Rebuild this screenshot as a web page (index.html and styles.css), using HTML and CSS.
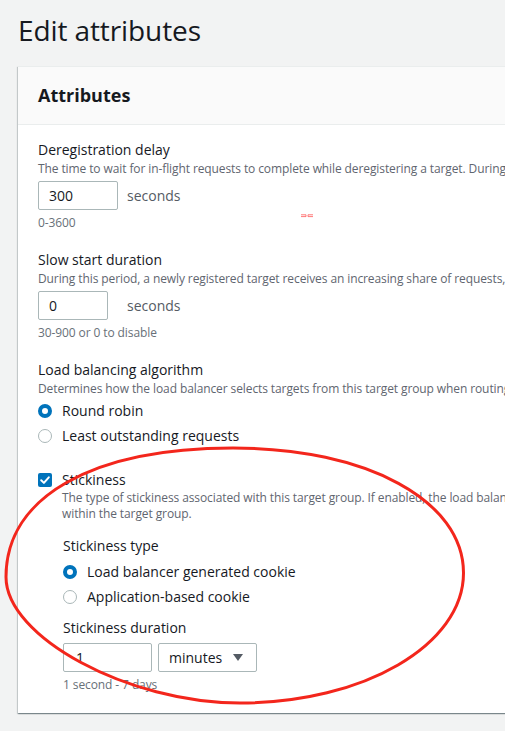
FILE: index.html
```html
<!DOCTYPE html>
<html lang="en">
<head>
<meta charset="utf-8">
<title>Edit attributes</title>
<link rel="stylesheet" href="styles.css">
</head>
<body>
<div class="page">
  <h1 class="title">Edit attributes</h1>
  <section class="card">
    <header class="card-header"><h2 class="card-title">Attributes</h2></header>
    <div class="card-body">
      <div class="field">
        <div class="label">Deregistration delay</div>
        <div class="desc">The time to wait for in-flight requests to complete while deregistering a target. During this time, the state of the target is draining.</div>
        <div class="control-row">
          <div class="input w80">300</div>
          <span class="unit">seconds</span>
        </div>
        <div class="hint">0-3600</div>
      </div>

      <div class="field">
        <div class="label">Slow start duration</div>
        <div class="desc">During this period, a newly registered target receives an increasing share of requests, until it reaches its fair share.</div>
        <div class="control-row">
          <div class="input w70">0</div>
          <span class="unit">seconds</span>
        </div>
        <div class="hint">30-900 or 0 to disable</div>
      </div>

      <div class="field">
        <div class="label">Load balancing algorithm</div>
        <div class="desc">Determines how the load balancer selects targets from this target group when routing requests.</div>
        <div class="radio-group">
          <div class="radio-row"><span class="radio checked"></span><span class="radio-label">Round robin</span></div>
          <div class="radio-row"><span class="radio"></span><span class="radio-label">Least outstanding requests</span></div>
        </div>
      </div>

      <div class="field field-sticky">
        <div class="check-row">
          <span class="checkbox"><svg viewBox="0 0 14 14" width="14" height="14"><path d="M3.2 7.3 L5.9 9.9 L10.8 4.3" fill="none" stroke="#fff" stroke-width="2" stroke-linecap="round" stroke-linejoin="round"/></svg></span>
          <span class="check-label">Stickiness</span>
        </div>
        <div class="nested">
          <div class="desc desc-wrap">The type of stickiness associated with this target group. If enabled, the load balancer binds a client's session to a specific target within the target group.</div>
          <div class="sub-field">
            <div class="label">Stickiness type</div>
            <div class="radio-group">
              <div class="radio-row"><span class="radio checked"></span><span class="radio-label">Load balancer generated cookie</span></div>
              <div class="radio-row"><span class="radio"></span><span class="radio-label">Application-based cookie</span></div>
            </div>
          </div>
          <div class="sub-field duration">
            <div class="label">Stickiness duration</div>
            <div class="control-row tight">
              <div class="input w89">1</div>
              <div class="select">
                <span>minutes</span>
                <svg class="caret" viewBox="0 0 10 7" width="10" height="7"><polygon points="0,0 10,0 5,7" fill="#545b64"/></svg>
              </div>
            </div>
            <div class="hint">1 second - 7 days</div>
          </div>
        </div>
      </div>
    </div>
  </section>
</div>

<svg class="annotation" width="505" height="731" viewBox="0 0 505 731">
  <path d="M6 577 C6 497 92 448 233 448 C366.7 448 463.5 500.5 463.5 573 C463.5 644.8 363.4 703 240 703 C128 703 6 637 6 577 Z" fill="none" stroke="#f3261c" stroke-width="3"/>
  <path d="M301 214.8 H306 V216.6 H301 M313 214.8 H308 V216.6 H313" fill="none" stroke="#ff5a5a" stroke-width="1" opacity="0.8"/>
</svg>
</body>
</html>
```

FILE: styles.css
```css
html, body {
  margin: 0;
  padding: 0;
}
body {
  background: #f2f3f3;
  font-family: "Open Sans", "Noto Sans", "Liberation Sans", sans-serif;
  color: #16191f;
  overflow: hidden;
  width: 505px;
  height: 731px;
  position: relative;
}
.page {
  width: 1200px;
  padding: 12px 0 0 18px;
}
.title {
  margin: 0;
  font-size: 28px;
  line-height: 36px;
  font-weight: 400;
  color: #16191f;
  letter-spacing: -0.1px;
}
.card {
  margin-top: 18px;
  width: 1100px;
  background: #fff;
  border-top: 1px solid #eaeded;
  box-shadow: 0 1px 1px 0 rgba(0, 28, 36, 0.3), 1px 1px 1px 0 rgba(0, 28, 36, 0.15), -1px 1px 1px 0 rgba(0, 28, 36, 0.15);
}
.card-header {
  background: #fafafa;
  border-bottom: 1px solid #eaeded;
  padding: 17px 20px 18px;
}
.card-title {
  margin: 0;
  font-size: 18px;
  line-height: 22px;
  font-weight: 700;
}
.card-body {
  padding: 14px 20px 20px;
  display: flex;
  flex-direction: column;
  gap: 18px;
}
.field {
  display: flex;
  flex-direction: column;
}
.field-sticky {
  margin-top: 3px;
}
.label {
  font-size: 14px;
  line-height: 22px;
  color: #16191f;
}
.desc {
  font-size: 12px;
  line-height: 16px;
  color: #5f6670;
  letter-spacing: -0.1px;
}
.desc-wrap {
  max-width: 712px;
  margin-top: -1px;
}
.hint {
  font-size: 12px;
  line-height: 16px;
  color: #687078;
  margin-top: 5px;
  letter-spacing: -0.1px;
}
.control-row {
  margin-top: 4px;
  display: grid;
  grid-template-columns: 80px auto;
  column-gap: 9px;
  align-items: center;
  justify-content: start;
}
.control-row.tight {
  grid-template-columns: 89px 99px;
  column-gap: 6px;
}
.input {
  box-sizing: border-box;
  height: 29px;
  border: 1px solid #aab7b8;
  border-radius: 2px;
  background: #fff;
  padding: 0 10px;
  font-size: 14px;
  line-height: 27px;
  color: #16191f;
}
.w80 { width: 80px; }
.w70 { width: 70px; }
.w89 { width: 89px; padding-left: 12px; }
.unit {
  font-size: 14px;
  line-height: 22px;
  color: #545b64;
}
.select {
  box-sizing: border-box;
  height: 29px;
  border: 1px solid #aab7b8;
  border-radius: 2px;
  background: #fff;
  padding: 0 13px 0 10px;
  font-size: 14px;
  color: #16191f;
  display: flex;
  align-items: center;
  justify-content: space-between;
}
.caret {
  display: block;
}
.radio-group {
  margin-top: 1px;
  display: flex;
  flex-direction: column;
}
.radio-row {
  height: 25px;
  display: flex;
  align-items: center;
  gap: 10px;
}
.radio {
  box-sizing: border-box;
  width: 14px;
  height: 14px;
  border-radius: 50%;
  border: 1.5px solid #aab7b8;
  background: #fff;
  flex: none;
}
.radio.checked {
  border: 4.5px solid #0073bb;
}
.radio-label {
  font-size: 14px;
  line-height: 22px;
  color: #16191f;
}
.check-row {
  display: flex;
  align-items: center;
  gap: 10px;
  height: 22px;
}
.checkbox {
  width: 14px;
  height: 14px;
  border-radius: 2px;
  background: #0073bb;
  flex: none;
  display: flex;
}
.check-label {
  font-size: 14px;
  line-height: 22px;
}
.nested {
  margin-left: 24px;
  display: flex;
  flex-direction: column;
}
.sub-field {
  margin-top: 13px;
  display: flex;
  flex-direction: column;
  margin-left: 1px;
}
.sub-field .radio-group {
  margin-top: 2px;
}
.sub-field.duration {
  margin-top: 8px;
}
.annotation {
  position: absolute;
  left: 0;
  top: 0;
  pointer-events: none;
}
```
